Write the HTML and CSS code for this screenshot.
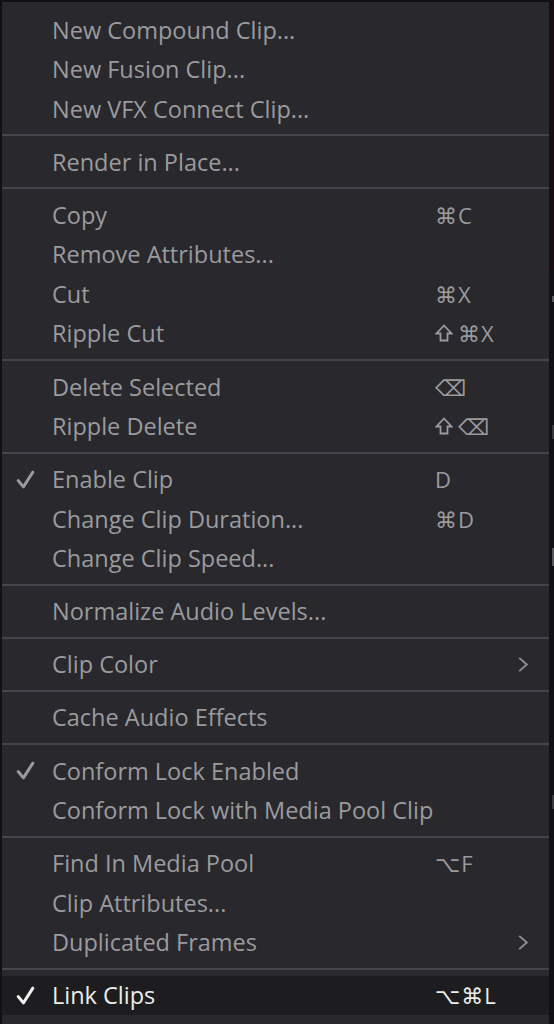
FILE: index.html
```html
<!DOCTYPE html>
<html>
<head>
    <title>Clip Menu</title>
    <meta name="viewport" content="width=device-width, initial-scale=1">
    <link rel="stylesheet" href="styles.css">
</head>
<body>
    <div class="screen">
        <ul class="menu">
            <li class="item"><span class="check"></span><span class="label">New Compound Clip...</span><span class="keys"></span></li>
            <li class="item"><span class="check"></span><span class="label">New Fusion Clip...</span><span class="keys"></span></li>
            <li class="item"><span class="check"></span><span class="label">New VFX Connect Clip...</span><span class="keys"></span></li>
            <li class="sep"></li>
            <li class="item"><span class="check"></span><span class="label">Render in Place...</span><span class="keys"></span></li>
            <li class="sep"></li>
            <li class="item"><span class="check"></span><span class="label">Copy</span><span class="keys">&#8984;C</span></li>
            <li class="item"><span class="check"></span><span class="label">Remove Attributes...</span><span class="keys"></span></li>
            <li class="item"><span class="check"></span><span class="label">Cut</span><span class="keys">&#8984;X</span></li>
            <li class="item"><span class="check"></span><span class="label">Ripple Cut</span>
                <span class="keys"><svg class="shift" viewBox="0 0 18 18"><polygon points="9,1.5 16.5,9.5 12.5,9.5 12.5,16.5 5.5,16.5 5.5,9.5 1.5,9.5"/></svg>&#8984;X</span>
            </li>
            <li class="sep"></li>
            <li class="item"><span class="check"></span><span class="label">Delete Selected</span><span class="keys">&#9003;</span></li>
            <li class="item"><span class="check"></span><span class="label">Ripple Delete</span>
                <span class="keys"><svg class="shift" viewBox="0 0 18 18"><polygon points="9,1.5 16.5,9.5 12.5,9.5 12.5,16.5 5.5,16.5 5.5,9.5 1.5,9.5"/></svg>&#9003;</span>
            </li>
            <li class="sep"></li>
            <li class="item">
                <span class="check"><svg viewBox="0 0 20 20"><polyline points="3,11 8,17 17,3"/></svg></span>
                <span class="label">Enable Clip</span><span class="keys">D</span>
            </li>
            <li class="item"><span class="check"></span><span class="label">Change Clip Duration...</span><span class="keys">&#8984;D</span></li>
            <li class="item"><span class="check"></span><span class="label">Change Clip Speed...</span><span class="keys"></span></li>
            <li class="sep"></li>
            <li class="item"><span class="check"></span><span class="label">Normalize Audio Levels...</span><span class="keys"></span></li>
            <li class="sep"></li>
            <li class="item"><span class="check"></span><span class="label">Clip Color</span><span class="keys sub"><svg viewBox="0 0 12 20"><polyline points="2,3 10,10 2,17"/></svg></span></li>
            <li class="sep"></li>
            <li class="item"><span class="check"></span><span class="label">Cache Audio Effects</span><span class="keys"></span></li>
            <li class="sep"></li>
            <li class="item">
                <span class="check"><svg viewBox="0 0 20 20"><polyline points="3,11 8,17 17,3"/></svg></span>
                <span class="label">Conform Lock Enabled</span><span class="keys"></span>
            </li>
            <li class="item"><span class="check"></span><span class="label">Conform Lock with Media Pool Clip</span><span class="keys"></span></li>
            <li class="sep"></li>
            <li class="item"><span class="check"></span><span class="label">Find In Media Pool</span><span class="keys">&#8997;F</span></li>
            <li class="item"><span class="check"></span><span class="label">Clip Attributes...</span><span class="keys"></span></li>
            <li class="item"><span class="check"></span><span class="label">Duplicated Frames</span><span class="keys sub"><svg viewBox="0 0 12 20"><polyline points="2,3 10,10 2,17"/></svg></span></li>
            <li class="sep"></li>
            <li class="item active">
                <span class="check"><svg viewBox="0 0 20 20"><polyline points="3,11 8,17 17,3"/></svg></span>
                <span class="label">Link Clips</span><span class="keys">&#8997;&#8984;L</span>
            </li>
        </ul>
        <div class="backdrop">
            <div class="tint"></div>
            <div class="mark m1"></div>
            <div class="mark m2"></div>
            <div class="mark m3"></div>
            <div class="mark m4"></div>
        </div>
    </div>
</body>
</html>
```

FILE: styles.css
```css
body {
    margin: 0;
    padding: 0;
    background-color: #111113;
    font-family: "Open Sans", "DejaVu Sans", sans-serif;
    overflow: hidden;
}

.screen {
    display: flex;
    height: 1024px;
    padding: 2px 0 0 2px;
    box-sizing: border-box;
}

.menu {
    list-style: none;
    margin: 0;
    padding: 8px 0 0 0;
    width: 547px;
    background-color: #28282d;
    color: #9b9b9e;
    font-size: 23.5px;
}

.item {
    display: grid;
    grid-template-columns: 50px 1fr 114px;
    align-items: center;
    height: 39.5px;
}

.check {
    display: flex;
    padding-left: 13px;
}

.check svg {
    width: 21px;
    height: 21px;
    fill: none;
    stroke: #9b9b9e;
    stroke-width: 2.8;
    stroke-linejoin: round;
    stroke-linecap: round;
}

.label {
    white-space: nowrap;
}

.keys {
    display: flex;
    align-items: center;
    font-family: "Open Sans", "DejaVu Sans", sans-serif;
    font-size: 22px;
    letter-spacing: 1px;
}

.shift {
    width: 18px;
    height: 18px;
    margin-right: 5px;
    fill: none;
    stroke: #9b9b9e;
    stroke-width: 1.8;
    stroke-linejoin: miter;
}

.keys.sub {
    justify-content: flex-end;
    padding-right: 20px;
}

.keys.sub svg {
    width: 12px;
    height: 19px;
    fill: none;
    stroke: #8e8e92;
    stroke-width: 2;
}

.sep {
    height: 2px;
    margin: 5.8px 0;
    background-color: #44454b;
}

.item.active {
    background-color: #1d1d20;
    color: #ececec;
    margin-top: 6px;
}

.item.active .check svg {
    stroke: #f2f2f2;
}

.backdrop {
    position: relative;
    flex: 1;
    margin-top: -2px;
}

.tint {
    height: 270px;
    margin-left: 2px;
    background-color: #1e0a0a;
}

.mark {
    position: absolute;
    left: 3px;
    width: 3px;
    background-color: #55565b;
}

.m1 { top: 296px; height: 6px; }
.m2 { top: 425px; height: 14px; background-color: #38393d; }
.m3 { top: 548px; height: 18px; }
.m4 { top: 795px; height: 14px; background-color: #38393d; }
```
